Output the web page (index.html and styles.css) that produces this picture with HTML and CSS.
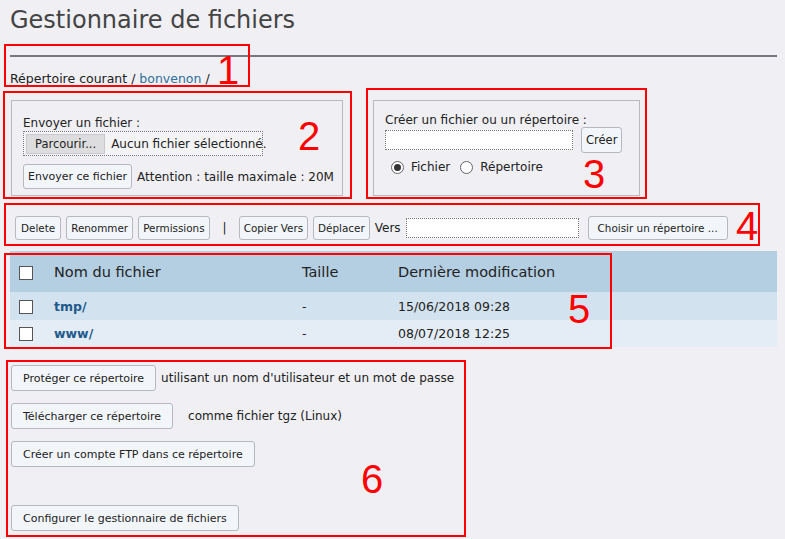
FILE: index.html
```html
<!DOCTYPE html>
<html lang="fr">
<head>
<meta charset="utf-8">
<title>Gestionnaire de fichiers</title>
<link rel="stylesheet" href="styles.css">
</head>
<body>
<div class="page">
  <h1 class="title">Gestionnaire de fichiers</h1>
  <hr class="rule">
  <div class="crumb">Répertoire courant / <a href="#" class="link">bonvenon</a> /</div>

  <div class="forms">
    <fieldset class="box box-upload">
      <div class="label">Envoyer un fichier :</div>
      <div class="file"><span class="file-btn">Parcourir...</span><span class="file-name">Aucun fichier sélectionné.</span></div>
      <div class="line"><button class="btn">Envoyer ce fichier</button><span>Attention : taille maximale : 20M</span></div>
    </fieldset>
    <fieldset class="box box-create">
      <div class="label">Créer un fichier ou un répertoire :</div>
      <div class="line line-create"><span class="text-input w-create"></span><button class="btn btn-create">Créer</button></div>
      <div class="radios">
        <span class="radio on"></span><span class="radio-label">Fichier</span>
        <span class="radio"></span><span class="radio-label">Répertoire</span>
      </div>
    </fieldset>
  </div>

  <div class="actions">
    <button class="btn btn-delete">Delete</button>
    <button class="btn">Renommer</button>
    <button class="btn">Permissions</button>
    <span class="sep">|</span>
    <button class="btn">Copier Vers</button>
    <button class="btn">Déplacer</button>
    <span class="vers">Vers</span>
    <span class="text-input w-dest"></span>
    <button class="btn btn-choose">Choisir un répertoire ...</button>
  </div>

  <table class="files">
    <colgroup><col class="c-check"><col class="c-name"><col class="c-size"><col></colgroup>
    <thead>
      <tr><th><span class="check"></span></th><th>Nom du fichier</th><th>Taille</th><th>Dernière modification</th></tr>
    </thead>
    <tbody>
      <tr class="odd"><td><span class="check"></span></td><td><a href="#" class="file-link">tmp/</a></td><td>-</td><td>15/06/2018 09:28</td></tr>
      <tr class="even"><td><span class="check"></span></td><td><a href="#" class="file-link">www/</a></td><td>-</td><td>08/07/2018 12:25</td></tr>
    </tbody>
  </table>

  <div class="tools">
    <div class="tool"><button class="btn btn-tool">Protéger ce répertoire</button><span>utilisant un nom d'utilisateur et un mot de passe</span></div>
    <div class="tool"><button class="btn btn-tool">Télécharger ce répertoire</button><span class="pad-text">comme fichier tgz (Linux)</span></div>
    <div class="tool"><button class="btn btn-tool">Créer un compte FTP dans ce répertoire</button></div>
    <div class="tool tool-last"><button class="btn btn-tool">Configurer le gestionnaire de fichiers</button></div>
  </div>

  <div class="mark m1"></div><span class="num n1">1</span>
  <div class="mark m2"></div><span class="num n2">2</span>
  <div class="mark m3"></div><span class="num n3">3</span>
  <div class="mark m4"></div><span class="num n4">4</span>
  <div class="mark m5"></div><span class="num n5">5</span>
  <div class="mark m6"></div><span class="num n6">6</span>
</div>
</body>
</html>
```
FILE: styles.css
```css
* { box-sizing: border-box; }
html, body { margin: 0; padding: 0; background: #efeff4; }
body {
  font-family: "DejaVu Sans", Verdana, sans-serif;
  font-size: 12px;
  color: #222;
}
.page { position: relative; padding: 0 8px 0 10px; width: 785px; height: 539px; overflow: hidden; white-space: nowrap; }
.title {
  margin: 0;
  padding-top: 5px;
  font-size: 24px;
  line-height: 30px;
  font-weight: normal;
  color: #444;
}
.rule { margin: 20px 0 0 0; border: 0; border-top: 2px solid #77777f; height: 0; }
.crumb { margin-top: 14px; line-height: 16px; font-size: 12.5px; }
.link { color: #2e6f9c; text-decoration: none; }

.forms { display: flex; gap: 29px; margin-top: 13px; }
.box {
  margin: 0 0 0 1px;
  border: 1px solid #b9b9be;
  padding: 15px 11px 0 11px;
  height: 96px;
  min-width: 0;
}
.box-upload { width: 332px; }
.box-create { width: 267px; padding-top: 12px; padding-left: 11px; }
.label { line-height: 14px; }
.file {
  display: inline-flex; align-items: center;
  width: 240px; height: 25px; margin-top: 1px;
  border: 1px dotted #777; background: #f4f4f6; padding-left: 2px;
}
.file-btn {
  background: #dddde0; border: 1px solid #c9c9cc; height: 20px; line-height: 18px;
  padding: 0 8px; color: #222; font-size: 11.5px;
}
.file-name { margin-left: 6px; }
.line { display: flex; align-items: center; gap: 5px; margin-top: 8px; }
.line-create { gap: 8px; margin-top: 0; }
.btn {
  font-family: inherit; font-size: 11px; color: #222;
  background: #f2f6fb; border: 1px solid #b5b8bd; border-radius: 3px;
  height: 25px; padding: 0 4px; margin: 0; cursor: pointer; white-space: nowrap;
}
.btn-create { height: 26px; font-size: 11.5px; }
.text-input { display: inline-block; height: 20px; background: #fff; border: 1px dotted #777; }
.w-create { width: 188px; margin-left: 0; }
.radios { display: flex; align-items: center; margin-top: 7px; padding-left: 6px; }
.radio { width: 13px; height: 13px; border: 1px solid #666; border-radius: 50%; background: #fff; position: relative; }
.radio.on::after { content: ""; position: absolute; left: 2px; top: 2px; width: 7px; height: 7px; border-radius: 50%; background: #333; }
.radio-label { margin: 0 10px 0 7px; }

.actions { display: flex; align-items: center; gap: 5px; margin-top: 19px; padding-left: 5px; height: 25px; }
.actions .btn { height: 24px; font-size: 10.4px; }
.actions .btn-delete { padding: 0 5px; }
.sep { margin: 0 7px 0 8px; }
.vers { font-size: 12px; }
.w-dest { width: 173px; }
.actions .btn-choose { margin-left: 4px; padding: 0 9px; }

.files { width: 100%; border-collapse: collapse; margin-top: 11px; table-layout: fixed; }
.c-check { width: 44px; }
.c-name { width: 248px; }
.c-size { width: 96px; }
.files th { background: #b4cee2; height: 41px; text-align: left; font-weight: normal; font-size: 14.5px; padding: 0; }
.files td { height: 28px; padding: 0; font-size: 12.5px; }
.files th:first-child, .files td:first-child { padding-left: 9px; }
.odd td { background: #d2e2ef; }
.even td { background: #e4ecf6; height: 27px; }
.check { display: inline-block; width: 14px; height: 14px; border: 1px solid #555; background: #fff; vertical-align: middle; }
.file-link { color: #1e5a8c; font-weight: bold; text-decoration: none; }

.tools { margin-top: 18px; padding-left: 1px; }
.tool { display: flex; align-items: center; gap: 5px; margin-bottom: 12px; font-size: 12px; }
.btn-tool { height: 26px; padding: 0 11px; }
.pad-text { margin-left: 10px; }
.tool-last { margin-top: 38px; }

.mark { position: absolute; border: 2px solid #f00; }
.m1 { left: 4px; top: 44px; width: 246px; height: 43px; }
.m2 { left: 3px; top: 91px; width: 349px; height: 108px; }
.m3 { left: 366px; top: 88px; width: 281px; height: 111px; }
.m4 { left: 4px; top: 203px; width: 756px; height: 43px; }
.m5 { left: 4px; top: 253px; width: 608px; height: 96px; }
.m6 { left: 6px; top: 360px; width: 460px; height: 177px; }
.num { position: absolute; color: #f00; font-family: "Liberation Sans", Arial, sans-serif; font-size: 40px; line-height: 40px; }
.n1 { left: 217px; top: 50px; }
.n2 { left: 298px; top: 116px; }
.n3 { left: 583px; top: 154px; }
.n4 { left: 736px; top: 206px; }
.n5 { left: 568px; top: 289px; }
.n6 { left: 361px; top: 459px; }
```
